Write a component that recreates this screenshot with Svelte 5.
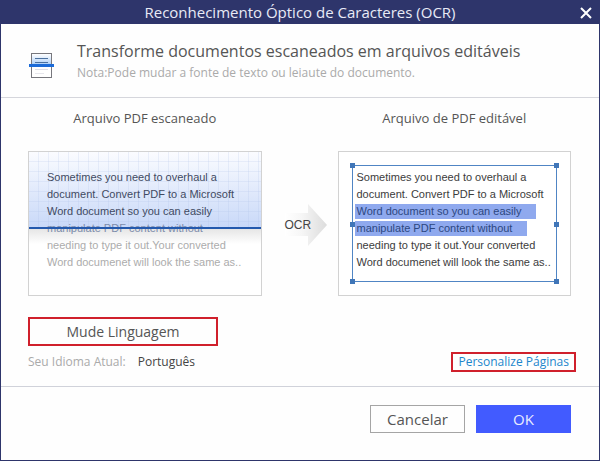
<script>
  const lines = [
    { text: 'Sometimes you need to overhaul a', scanned: true },
    { text: 'document. Convert PDF to a Microsoft', scanned: true },
    { text: 'Word document so you can easily', scanned: true, selected: true },
    { text: 'manipulate PDF content without', scanning: true, selected: true },
    { text: 'needing to type it out.Your converted' },
    { text: 'Word documenet will look the same as..' },
  ];

  const handles = ['nw', 'ne', 'w', 'e', 'sw', 'se'];

  let language = $state('Português');
</script>

<div class="dialog" role="dialog" aria-labelledby="dialog-title">
  <header class="titlebar">
    <h1 id="dialog-title">Reconhecimento Óptico de Caracteres (OCR)</h1>
    <button class="close" type="button" aria-label="Fechar">
      <svg width="12" height="12" viewBox="0 0 12 12">
        <path d="M1 1 L11 11 M11 1 L1 11" stroke="#fff" stroke-width="2" fill="none" />
      </svg>
    </button>
  </header>

  <section class="intro">
    <svg class="intro__icon" width="26" height="26" viewBox="0 0 26 26">
      <defs>
        <linearGradient id="scan" x1="0" y1="0" x2="0" y2="1">
          <stop offset="0" stop-color="#fff" />
          <stop offset="1" stop-color="#a9cdf7" />
        </linearGradient>
      </defs>
      <rect x="2.5" y="0.5" width="20" height="24" fill="#fff" stroke="#77777d" />
      <rect x="3" y="1" width="19" height="11" fill="url(#scan)" />
      <path d="M6 5.5 H19 M6 9.5 H19" stroke="#4c719f" />
      <path d="M6 16.5 H19" stroke="#dedee6" />
      <path d="M6 20.5 H15" stroke="#e6e6ec" />
      <rect x="0" y="11" width="25" height="3" fill="#1c6bd8" />
    </svg>
    <div>
      <h2>Transforme documentos escaneados em arquivos editáveis</h2>
      <p>Nota:Pode mudar a fonte de texto ou leiaute do documento.</p>
    </div>
  </section>

  <main class="content">
    <div class="compare">
      <figure>
        <figcaption>Arquivo PDF escaneado</figcaption>
        <div class="page page--scan">
          <div class="page__text">
            {#each lines as line}
              <div class:scanned={line.scanned} class:scanning={line.scanning}>{line.text}</div>
            {/each}
          </div>
          <div class="beam"></div>
        </div>
      </figure>

      <div class="arrow">
        <svg width="42" height="42" viewBox="0 0 42 42" aria-hidden="true">
          <defs>
            <linearGradient id="arrow-fill" x1="0" y1="0" x2="1" y2="0">
              <stop offset="0" stop-color="#fff" />
              <stop offset="0.4" stop-color="#f6f6f6" />
              <stop offset="1" stop-color="#dcdcdc" />
            </linearGradient>
          </defs>
          <path d="M0 9 H23 V0 L42 21 L23 42 V32 H0 Z" fill="url(#arrow-fill)" />
        </svg>
        <span>OCR</span>
      </div>

      <figure>
        <figcaption>Arquivo de PDF editável</figcaption>
        <div class="page">
          <div class="page__text">
            {#each lines as line}
              <div>{#if line.selected}<mark>{line.text}</mark>{:else}{line.text}{/if}</div>
            {/each}
          </div>
          <div class="selection">
            {#each handles as handle}
              <i class="handle handle--{handle}"></i>
            {/each}
          </div>
        </div>
      </figure>
    </div>

    <button class="language" type="button">Mude Linguagem</button>

    <div class="options">
      <div class="current">
        <span>Seu Idioma Atual:</span>
        <strong>{language}</strong>
      </div>
      <a href="#paginas">Personalize Páginas</a>
    </div>
  </main>

  <footer class="actions">
    <button type="button">Cancelar</button>
    <button class="primary" type="button">OK</button>
  </footer>
</div>

<style>
  :global(body) {
    background: #fff;
  }

  .dialog {
    box-sizing: border-box;
    min-height: 100vh;
    display: flex;
    flex-direction: column;
    border: 1px solid #2e356b;
    background: #fefefe;
    color: #555;
    font-family: "Open Sans", "Noto Sans", sans-serif;
  }

  h1, h2, p, figure {
    margin: 0;
    font-weight: 400;
  }

  button {
    padding: 0;
    border: 0;
    background: none;
    color: inherit;
    font-family: inherit;
  }

  /* === Title bar === */
  .titlebar {
    display: grid;
    grid-template-columns: 26px 1fr 26px;
    height: 23px;
    background: #2e356b;
  }

  h1 {
    grid-column: 2;
    color: #e8eaf6;
    font-size: 15px;
    line-height: 22px;
    text-align: center;
  }

  .close {
    display: flex;
    align-items: center;
    justify-content: center;
  }

  /* === Intro === */
  .intro {
    display: flex;
    gap: 22px;
    padding: 15px 28px;
    border-bottom: 1px solid #d5d6dc;
  }

  .intro__icon {
    margin-top: 14px;
  }

  h2 {
    font-size: 16px;
    line-height: 24px;
  }

  p {
    color: #aaa;
    font-size: 12px;
    line-height: 19px;
  }

  /* === Content === */
  .content {
    padding: 9px 23px 14px 27px;
    border-bottom: 1px solid #d0d2da;
  }

  .compare {
    display: grid;
    grid-template-columns: 1fr 76px 1fr;
    padding-right: 5px;
  }

  figcaption {
    font-size: 13px;
    line-height: 22px;
    text-align: center;
  }

  .page {
    position: relative;
    box-sizing: border-box;
    height: 145px;
    margin-top: 22px;
    padding: 17px 0 0 18px;
    border: 1px solid #d2d2d2;
    background: #fff;
  }

  .page__text {
    position: relative;
    color: #3c3c3c;
    font-family: "Liberation Sans", Arial, sans-serif;
    font-size: 11px;
    line-height: 17px;
    white-space: nowrap;
  }

  .page--scan {
    background:
      linear-gradient(#e4e4e4, #fff) 0 76px / 100% 16px no-repeat,
      repeating-linear-gradient(90deg, transparent 0 9px, #a9bde633 9px 10px) 0 0 / 100% 76px no-repeat,
      repeating-linear-gradient(transparent 0 9px, #a9bde633 9px 10px) 0 0 / 100% 76px no-repeat,
      linear-gradient(#fbfcff, #c8d8f8) 0 0 / 100% 76px no-repeat,
      #fff;
  }

  .page--scan .page__text {
    color: #acacac;
  }

  .page--scan .scanned {
    color: #414a62;
  }

  .page--scan .scanning {
    color: #7c8cab;
  }

  .beam {
    position: absolute;
    top: 75px;
    left: 0;
    right: 0;
    height: 2px;
    background: #2459ad;
  }

  .arrow {
    display: grid;
    align-items: center;
    justify-items: start;
    padding: 47px 0 0 23px;
    color: #444;
    font-family: "Liberation Sans", Arial, sans-serif;
    font-size: 12px;
  }

  .arrow svg,
  .arrow span {
    grid-area: 1 / 1;
  }

  mark {
    display: inline-block;
    margin-left: -2px;
    padding: 0 15px 0 2px;
    background: #8fa9ee;
    color: #2c4780;
    line-height: 15px;
  }

  .selection {
    position: absolute;
    inset: 13px;
    border: 1px solid #5085c4;
  }

  .handle {
    position: absolute;
    width: 5px;
    height: 5px;
    background: #4076b8;
  }

  .handle--nw, .handle--ne { top: -3px; }
  .handle--w, .handle--e { top: calc(50% - 2px); }
  .handle--sw, .handle--se { bottom: -3px; }
  .handle--nw, .handle--w, .handle--sw { left: -3px; }
  .handle--ne, .handle--e, .handle--se { right: -3px; }

  /* === Options === */
  .language {
    display: block;
    width: 190px;
    height: 29px;
    margin-top: 21px;
    border: 2px solid #d0202c;
    font-size: 14px;
  }

  .options {
    display: flex;
    align-items: center;
    justify-content: space-between;
    margin-top: 6px;
    font-size: 12px;
    line-height: 16px;
  }

  .current {
    display: flex;
    gap: 12px;
    color: #aaa;
  }

  .current strong {
    color: #444;
    font-weight: 400;
  }

  a {
    padding: 0 5px;
    border: 2px solid #d0202c;
    color: #1c86cc;
    text-decoration: none;
  }

  /* === Actions === */
  .actions {
    display: flex;
    justify-content: flex-end;
    gap: 11px;
    padding: 18px 28px;
  }

  .actions button {
    box-sizing: border-box;
    width: 95px;
    height: 28px;
    border: 1px solid #a5a5a5;
    font-size: 15px;
    line-height: 24px;
  }

  .actions .primary {
    border-color: #425bff;
    background: #425bff;
    color: #e8ebff;
  }
</style>
